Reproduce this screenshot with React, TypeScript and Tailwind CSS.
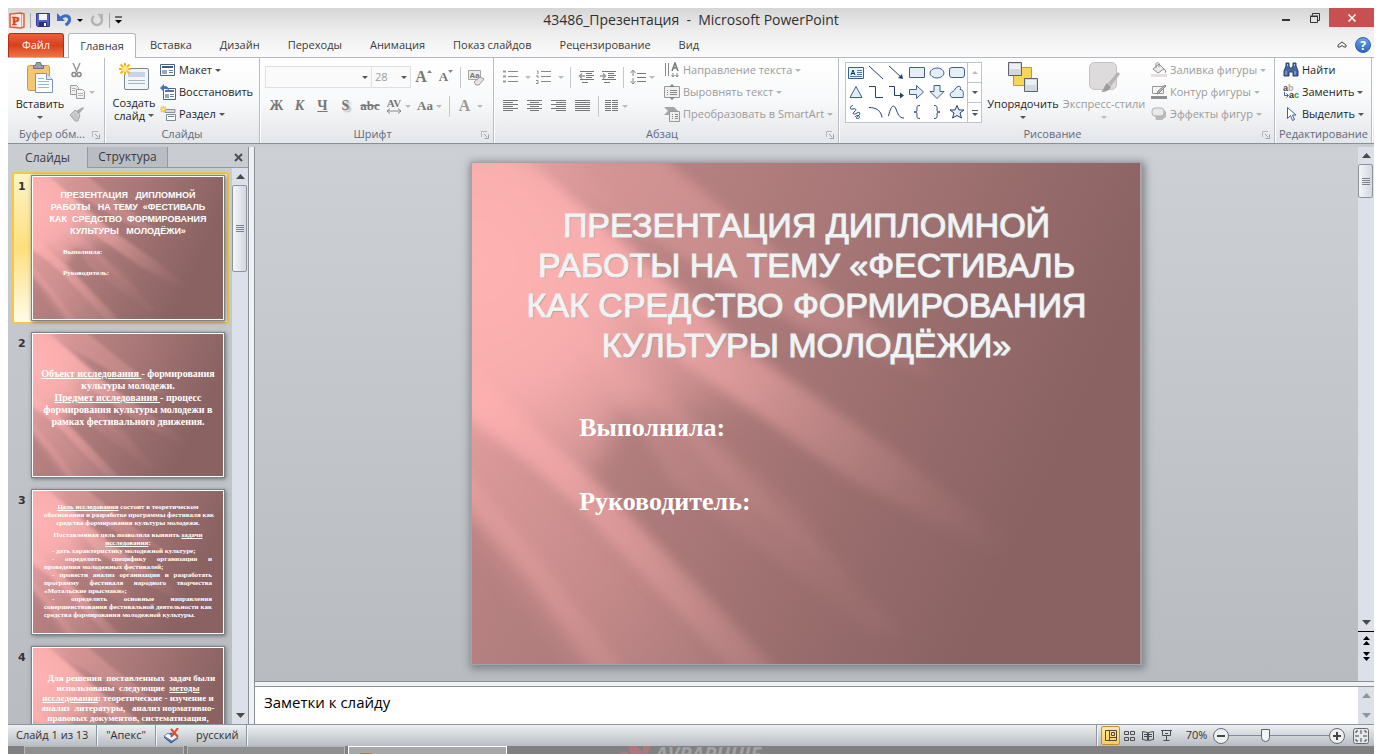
import type { ReactNode } from "react";
import { clsx } from "clsx";

const tabs = [
  "Вставка",
  "Дизайн",
  "Переходы",
  "Анимация",
  "Показ слайдов",
  "Рецензирование",
  "Вид",
];

/* ---------- small shared pieces ---------- */

function Caret({ className = "text-[#555]" }: { className?: string }) {
  return (
    <svg width="6" height="3" viewBox="0 0 6 3" className={clsx("shrink-0", className)}>
      <path d="M0 0h6L3 3z" fill="currentColor" />
    </svg>
  );
}

function Sep() {
  return <span className="mx-1 h-[21px] w-px shrink-0 bg-[#c3c8cf]" />;
}

function Icon({
  w = 16,
  h = 16,
  children,
}: {
  w?: number;
  h?: number;
  children: ReactNode;
}) {
  return (
    <svg width={w} height={h} viewBox={`0 0 ${w} ${h}`} fill="none" className="shrink-0">
      {children}
    </svg>
  );
}

function SmallButton({
  icon,
  label,
  caret = true,
  disabled = false,
}: {
  icon: ReactNode;
  label: string;
  caret?: boolean;
  disabled?: boolean;
}) {
  return (
    <button
      className={clsx(
        "flex h-[22px] items-center gap-[3px] whitespace-nowrap",
        disabled ? "text-[#9b9b9b]" : "text-[#1e1e1e]",
      )}
    >
      {icon}
      <span>{label}</span>
      {caret && <Caret className={disabled ? "text-[#b5b5b5]" : "text-[#555]"} />}
    </button>
  );
}

function Group({
  label,
  launcher = false,
  className,
  children,
}: {
  label: string;
  launcher?: boolean;
  className: string;
  children: ReactNode;
}) {
  return (
    <section
      className={clsx(
        "flex shrink-0 flex-col border-r border-[#b9bec6] shadow-[1px_0_0_#fff]",
        className,
      )}
    >
      <div className="flex h-[68px] px-1 pt-px">{children}</div>
      <div className="flex h-[17px] items-center px-1 text-[#5f6a7a]">
        <span className="flex-1 text-center">{label}</span>
        {launcher && (
          <button aria-label={`${label}: параметры`}>
            <Icon w={8} h={8}>
              <path d="M.5 6V.5H6" stroke="#b3b8bf" />
              <path d="M3 3l3 3M7.500 3.500v4h-4" stroke="#9ba1a9" />
            </Icon>
          </button>
        )}
      </div>
    </section>
  );
}

function IconButton({
  label,
  className = "w-[23px]",
  children,
}: {
  label: string;
  className?: string;
  children: ReactNode;
}) {
  return (
    <button
      aria-label={label}
      className={clsx(
        "flex h-[22px] shrink-0 items-center justify-center gap-[3px] text-[#777]",
        className,
      )}
    >
      {children}
    </button>
  );
}

/* ---------- slide background with light rays ---------- */

function ApexDefs() {
  return (
    <svg width="0" height="0" className="absolute" aria-hidden="true">
      <defs>
        <linearGradient id="apexBase" gradientUnits="userSpaceOnUse" x1="60" y1="60" x2="590" y2="300">
          <stop offset="0" stopColor="#c08787" />
          <stop offset=".45" stopColor="#aa7878" />
          <stop offset=".8" stopColor="#946969" />
          <stop offset="1" stopColor="#8a6262" />
        </linearGradient>
        <linearGradient id="apexRay" gradientUnits="userSpaceOnUse" x1="60" y1="20" x2="540" y2="390">
          <stop offset="0" stopColor="#ffb0b0" />
          <stop offset=".5" stopColor="#f2a8a8" stopOpacity=".75" />
          <stop offset="1" stopColor="#b58484" stopOpacity="0" />
        </linearGradient>
        <linearGradient id="apexLow" gradientUnits="userSpaceOnUse" x1="20" y1="230" x2="310" y2="510">
          <stop offset="0" stopColor="#ffb0b0" />
          <stop offset=".5" stopColor="#f3a8a8" stopOpacity=".7" />
          <stop offset="1" stopColor="#d29696" stopOpacity=".35" />
        </linearGradient>
        <radialGradient id="apexGlow" gradientUnits="userSpaceOnUse" cx="0" cy="100" r="320">
          <stop offset="0" stopColor="#ffb2b2" />
          <stop offset=".4" stopColor="#ffb2b2" stopOpacity=".9" />
          <stop offset="1" stopColor="#ffb2b2" stopOpacity="0" />
        </radialGradient>
        <filter id="apexWide" x="-20%" y="-20%" width="140%" height="140%">
          <feGaussianBlur stdDeviation="14" />
        </filter>
        <filter id="apexSoft" x="-20%" y="-20%" width="140%" height="140%">
          <feGaussianBlur stdDeviation="6" />
        </filter>
        <symbol id="apex" viewBox="0 0 670 503" preserveAspectRatio="none">
          <path d="M0 0h670v503H0z" fill="url(#apexBase)" />
          <g filter="url(#apexWide)">
            <path d="M-50-50H20L250 175 380 290 240 250 150 250 110 330 60 280-50 240z" fill="url(#apexGlow)" />
            <path d="M-50 210 60 290 220 450 290 550H140L0 350-50 320z" fill="url(#apexLow)" opacity=".5" />
          </g>
          <g filter="url(#apexSoft)">
            <path d="M60-10H185L300 85 470 215 330 165 150 60z" fill="url(#apexRay)" opacity=".4" />
            <path d="M45-5 275 187 430 295 562 398 520 392 380 318 210 200z" fill="url(#apexRay)" opacity=".75" />
            <path d="M-20 190 60 262 140 335 255 455 315 520H272L220 465 105 345 60 305-20 240z" fill="url(#apexLow)" opacity=".8" />
            <path d="M-20 300 0 318 70 400 160 520H130L60 420-20 330z" fill="url(#apexLow)" opacity=".35" />
            <path d="M90 150 250 290 430 470 400 470 200 320z" fill="url(#apexLow)" opacity=".25" />
            <path d="M150 190 330 350 390 430 250 320z" fill="url(#apexLow)" opacity=".2" />
          </g>
        </symbol>
      </defs>
    </svg>
  );
}

function SlideFrame({ className, children }: { className: string; children: ReactNode }) {
  return (
    <div className={clsx("grid overflow-hidden", className)}>
      <svg
        viewBox="0 0 670 503"
        preserveAspectRatio="none"
        className="h-full w-full [grid-area:1/1]"
        aria-hidden="true"
      >
        <use href="#apex" width="670" height="503" />
      </svg>
      <div className="z-10 min-h-0 overflow-hidden text-white [grid-area:1/1]">{children}</div>
    </div>
  );
}

/* ---------- title bar and tabs ---------- */

function TitleBar() {
  return (
    <header className="grid h-6 shrink-0 grid-cols-[1fr_auto_1fr] bg-gradient-to-b from-[#d6d6d6] to-[#eeeeee]">
      <div className="flex items-center gap-[7px] pl-px">
        <Icon w={16} h={17}>
          <path d="M1 2l11-1 3 1v13l-3 1-11-1z" fill="#fbe9e2" stroke="#d9603c" strokeWidth="1.500" />
          <path d="M12.500 2v13" stroke="#f0a285" />
          <text x="3" y="13" fontSize="12" fontWeight="700" fill="#d24726" stroke="#d24726" strokeWidth=".6" fontFamily="Liberation Serif, serif">
            P
          </text>
        </Icon>
        <span className="-mx-0.5 h-[15px] w-px bg-[#a9a9a9]" />
        <button aria-label="Сохранить">
          <Icon w={14} h={14}>
            <path d="M.5.5h13v13h-12l-1-1z" fill="#5560c8" stroke="#32389a" />
            <path d="M3 1h8v6H3z" fill="#f4f6ff" />
            <path d="M3 9h8v5H3z" fill="#2b307f" />
            <path d="M8 10h2v3H8z" fill="#fff" />
          </Icon>
        </button>
        <button aria-label="Отменить" className="flex items-center gap-[5px]">
          <Icon w={15} h={14}>
            <path d="M4 5c4-4 9-2 8.500 2-.3 2-2 4-4 5" stroke="#3a6cc8" strokeWidth="3" />
            <path d="M0 0v8h8z" fill="#3a6cc8" />
          </Icon>
          <Caret className="text-black" />
        </button>
        <button aria-label="Повторить">
          <Icon w={14} h={14}>
            <path d="M4 3a5 5 0 1 0 6 0" stroke="#b3b3b3" strokeWidth="2.500" />
            <path d="M7 1h6v5z" fill="#b3b3b3" />
          </Icon>
        </button>
        <span className="-mx-0.5 h-[15px] w-px bg-[#a9a9a9]" />
        <button aria-label="Настройка панели">
          <Icon w={7} h={8}>
            <path d="M0 1h7" stroke="#000" />
            <path d="M0 4h7L3.500 7.500z" fill="#000" />
          </Icon>
        </button>
      </div>
      <h1 className="self-center whitespace-pre text-sm text-[#303030]">
        43486_Презентация  -  Microsoft PowerPoint
      </h1>
      <div className="flex items-start justify-end">
        <button aria-label="Свернуть" className="grid h-[19px] w-7 place-items-center">
          <Icon w={8} h={8}>
            <path d="M0 6h8" stroke="#333" strokeWidth="2" />
          </Icon>
        </button>
        <button aria-label="Восстановить окно" className="grid h-[19px] w-[29px] place-items-center">
          <Icon w={10} h={10}>
            <path d="M2.500 2.500v-2h7v7h-2" stroke="#333" />
            <path d="M.5 3.500h7v6h-7z" stroke="#333" />
            <path d="M0 3h8" stroke="#333" />
          </Icon>
        </button>
        <button aria-label="Закрыть" className="grid h-[19px] w-[45px] place-items-center bg-[#c75050]">
          <Icon w={8} h={8}>
            <path d="M.5.5l7 7M7.500.5l-7 7" stroke="#fff" strokeWidth="1.500" />
          </Icon>
        </button>
      </div>
    </header>
  );
}

function TabRow() {
  return (
    <nav className="flex h-[26px] shrink-0 items-end border-b border-[#b3b8bf] bg-gradient-to-b from-[#eeeeee] to-[#fbfbfb] text-[#3b3b3b]">
      <button className="h-6 w-14 rounded-t-[3px] border border-b-0 border-[#b52e10] bg-gradient-to-b from-[#e8603c] via-[#d9401c] to-[#ee7447] text-white">
        Файл
      </button>
      <button className="-mb-px ml-1 h-[25px] w-[68px] rounded-t-[3px] border border-b-0 border-[#b3b8bf] bg-white">
        Главная
      </button>
      {tabs.map((tab) => (
        <button key={tab} className="h-6 whitespace-nowrap px-[14px]">
          {tab}
        </button>
      ))}
      <div className="ml-auto flex h-[25px] items-center gap-2 pr-[3px]">
        <button aria-label="Свернуть ленту">
          <Icon w={10} h={7}>
            <path d="M1 4l4-3 4 3v2H7L5 4.500 3 6H1z" stroke="#444" />
          </Icon>
        </button>
        <button
          aria-label="Справка"
          className="grid size-4 place-items-center rounded-full border border-[#2a5db0] bg-gradient-to-b from-[#6ea0e6] to-[#2f66c4] text-xs font-bold text-white"
        >
          ?
        </button>
      </div>
    </nav>
  );
}

/* ---------- ribbon groups ---------- */

function ClipboardGroup() {
  return (
    <Group label="Буфер обм..." launcher className="w-[97px]">
      <button className="flex w-14 shrink-0 flex-col items-center pt-[3px] text-[#1e1e1e]">
        <Icon w={26} h={31}>
          <rect x=".5" y="3.500" width="22" height="25" rx="2" fill="#f3c671" stroke="#d09a3c" />
          <path d="M6.500 3.500h2l1-3h4l1 3h2v3h-10z" fill="#9aa1ad" stroke="#6a7280" />
          <path d="M8.500 11.500h11l6 6v13h-17z" fill="#fff" stroke="#7f94b3" />
          <path d="M19.500 11.500v6h6" fill="#dfe8f4" stroke="#7f94b3" />
          <path d="M11 16.500h6M11 19.500h11M11 22.500h11M11 25.500h11" stroke="#9db4d2" />
        </Icon>
        <span className="mt-[3px] leading-4">Вставить</span>
        <Caret className="mt-1 text-[#555]" />
      </button>
      <div className="flex flex-col">
        <IconButton label="Вырезать" className="w-[18px]">
          <Icon>
            <path d="M4 1l4 9M11 1L7 10" stroke="#999" strokeWidth="1.500" />
            <circle cx="5" cy="12.500" r="2" stroke="#888" strokeWidth="1.500" />
            <circle cx="10" cy="12.500" r="2" stroke="#888" strokeWidth="1.500" />
          </Icon>
        </IconButton>
        <IconButton label="Копировать" className="w-[28px]">
          <Icon>
            <path d="M.5 1.500h6l2 2v7h-8z" fill="#eee" stroke="#9c9c9c" />
            <path d="M6.500 5.500h6l2 2v7h-8z" fill="#f4f4f4" stroke="#9c9c9c" />
            <path d="M2 4.500h4M2 6.500h3M8 9.500h5M8 11.500h5" stroke="#b5b5b5" />
          </Icon>
          <Caret className="text-[#bbb]" />
        </IconButton>
        <IconButton label="Формат по образцу" className="w-[18px]">
          <Icon>
            <path d="M14 1l1 1-5 6-3-3z" fill="#aaa" />
            <path d="M6 4l5 5-2 6H6L1 9z" fill="#cfcfcf" stroke="#a8a8a8" />
            <path d="M3 9l4 5M5 7l4 6" stroke="#b5b5b5" />
          </Icon>
        </IconButton>
      </div>
    </Group>
  );
}

function Burst() {
  return (
    <g stroke="#f0b81c" strokeWidth="2">
      <path d="M6 0v12M0 6h12M1.500 1.500l9 9M10.500 1.500l-9 9" />
      <circle cx="6" cy="6" r="2" fill="#fff6b8" stroke="#ffe46a" />
    </g>
  );
}

function SlidesGroup() {
  return (
    <Group label="Слайды" className="w-[155px]">
      <button className="ml-0.5 flex w-[46px] flex-col items-center pt-1 text-[#1e1e1e]">
        <Icon w={31} h={29}>
          <rect x="5.500" y="5.500" width="24" height="21" rx="1.500" fill="#f3f5f8" stroke="#7d858f" />
          <path d="M9 9h17v5H9z" fill="#c8d3e3" />
          <path d="M9 17.500h17M9 20.500h17" stroke="#a8b3c2" />
          <Burst />
        </Icon>
        <span className="mt-1 leading-[13px]">Создать</span>
        <span className="flex items-center gap-[3px] leading-[13px]">
          слайд <Caret />
        </span>
      </button>
      <div className="ml-[3px] flex flex-col">
        <SmallButton
          label="Макет"
          icon={
            <Icon>
              <path d="M.5 2.500h14v11H.5z" fill="#fff" stroke="#4e6287" />
              <path d="M2 4h11v2H2z" fill="#3e5a8c" />
              <path d="M2 8h5v4H2z" fill="#9aa8bf" />
              <path d="M9 8.500h4M9 10.500h4" stroke="#6e7f9c" />
            </Icon>
          }
        />
        <SmallButton
          label="Восстановить"
          caret={false}
          icon={
            <Icon>
              <path d="M3.500 4.500h12v11h-12z" fill="#fff" stroke="#4e6287" />
              <path d="M5 6h9v2H5z" fill="#5a7099" />
              <path d="M5 10h4v4H5z" fill="#9aa8bf" />
              <path d="M10 10.500h4M10 12.500h4" stroke="#6e7f9c" />
              <path d="M0 4l4-4v2c3 0 5 1 5 5C8 5 7 5 4 5v3z" fill="#3f74c6" />
            </Icon>
          }
        />
        <SmallButton
          label="Раздел"
          icon={
            <Icon>
              <path d="M5 3.500h10v3H5z" fill="#d5d9df" stroke="#8a919b" />
              <path d="M6.500 8.500h9v6h-9z" fill="#f7f9fb" stroke="#7d8896" />
              <path d="M8 10.500h6" stroke="#6b7f9c" />
              <g transform="scale(.55)">
                <Burst />
              </g>
            </Icon>
          }
        />
      </div>
    </Group>
  );
}

function FontGroup() {
  return (
    <Group label="Шрифт" launcher className="w-[234px]">
      <div className="flex flex-col gap-[7px] pt-[7px]">
        <div className="flex items-center pl-px">
          <div className="grid items-center">
            <select
              aria-label="Шрифт"
              className="h-[22px] w-[107px] appearance-none border border-[#dcdfe4] bg-[#fafafb] [grid-area:1/1]"
            />
            <span className="pointer-events-none justify-self-end pr-1 [grid-area:1/1]">
              <Caret />
            </span>
          </div>
          <div className="-ml-px grid items-center">
            <select
              aria-label="Размер шрифта"
              className="h-[22px] w-10 appearance-none border border-[#dcdfe4] bg-[#fafafb] pl-[3px] text-[#9b9b9b] [grid-area:1/1]"
            >
              <option>28</option>
            </select>
            <span className="pointer-events-none justify-self-end pr-1 [grid-area:1/1]">
              <Caret />
            </span>
          </div>
          <button
            aria-label="Увеличить размер"
            className="flex h-[22px] w-[25px] items-center justify-center text-[#777]"
          >
            <span className="font-['Liberation_Serif',serif] text-base font-bold leading-5">A</span>
            <Icon w={5} h={16}>
              <path d="M0 4h5L2.500 1z" fill="#888" />
            </Icon>
          </button>
          <button
            aria-label="Уменьшить размер"
            className="flex h-[22px] w-5 items-center justify-center text-[#777]"
          >
            <span className="font-['Liberation_Serif',serif] text-[13px] font-bold leading-5">A</span>
            <Icon w={5} h={16}>
              <path d="M0 1h5L2.500 4z" fill="#888" />
            </Icon>
          </button>
          <Sep />
          <IconButton label="Очистить формат">
            <Icon w={17} h={17}>
              <path d="M.5 1.500h12v9H.5z" fill="#ececec" stroke="#a5a5a5" />
              <text x="1.500" y="9" fontSize="8" fontWeight="700" fill="#777" fontFamily="Liberation Sans, sans-serif">
                Aa
              </text>
              <path d="M6 13l6-5 4 2-5 6H8z" fill="#e9e3e6" stroke="#999" />
            </Icon>
          </IconButton>
        </div>
        <div className="flex items-center pl-px font-['Liberation_Serif',serif] text-sm">
          <IconButton label="Полужирный">
            <b>Ж</b>
          </IconButton>
          <IconButton label="Курсив">
            <b className="italic">К</b>
          </IconButton>
          <IconButton label="Подчеркнутый">
            <b className="underline">Ч</b>
          </IconButton>
          <IconButton label="Тень текста">
            <b className="[text-shadow:2px_2px_2px_#aaa]">S</b>
          </IconButton>
          <IconButton label="Зачеркнутый" className="w-[26px]">
            <b className="text-[13px] line-through">abc</b>
          </IconButton>
          <IconButton label="Интервал" className="w-[31px]">
            <span className="flex flex-col items-center">
              <b className="text-[11px] leading-[10px]">AV</b>
              <Icon w={16} h={6}>
                <path d="M1 3h14M4 .5L1 3l3 2.500M12 .5L15 3l-3 2.500" stroke="#888" />
              </Icon>
            </span>
            <Caret className="text-[#bbb]" />
          </IconButton>
          <IconButton label="Регистр" className="w-[31px]">
            <b className="text-[13px]">Aa</b>
            <Caret className="text-[#bbb]" />
          </IconButton>
          <Sep />
          <IconButton label="Цвет текста" className="w-[34px]">
            <b className="text-base text-[#999]">A</b>
            <Caret className="ml-1 text-[#bbb]" />
          </IconButton>
        </div>
      </div>
    </Group>
  );
}

function Lines({ d }: { d: string }) {
  return (
    <Icon w={15} h={12}>
      <path d={d} stroke="#777" />
    </Icon>
  );
}

function ParagraphGroup() {
  return (
    <Group label="Абзац" launcher className="w-[345px]">
      <div className="flex w-[166px] flex-col gap-[7px] pt-[7px]">
        <div className="flex items-center pl-0.5">
          <IconButton label="Маркеры" className="w-[33px]">
            <Icon w={15} h={14}>
              <path d="M0 1.500h3M0 6.500h3M0 11.500h3" stroke="#999" strokeWidth="2" />
              <path d="M5 1.500h10M5 6.500h10M5 11.500h10" stroke="#888" />
            </Icon>
            <Caret className="ml-1 text-[#bbb]" />
          </IconButton>
          <IconButton label="Нумерация" className="w-[33px]">
            <Icon w={15} h={14}>
              <path d="M1 1h1v3M0 6h2v2M0 10.500h2v3H0" stroke="#888" />
              <path d="M5 1.500h10M5 6.500h10M5 11.500h10" stroke="#888" />
            </Icon>
            <Caret className="ml-1 text-[#bbb]" />
          </IconButton>
          <Sep />
          <IconButton label="Уменьшить отступ" className="w-[22px]">
            <Icon w={16} h={14}>
              <path d="M2 1.500h14M8 3.500h6M8 5.500h8M8 7.500h6M2 9.500h14M4 12.500h6" stroke="#777" />
              <path d="M7 6H2M4 3.500L1.500 6 4 8.500" stroke="#999" strokeWidth="1.500" />
            </Icon>
          </IconButton>
          <IconButton label="Увеличить отступ" className="w-[22px]">
            <Icon w={16} h={14}>
              <path d="M2 1.500h14M8 3.500h6M8 5.500h8M8 7.500h6M2 9.500h14M4 12.500h6" stroke="#777" />
              <path d="M0 6h5M3 3.500L5.500 6 3 8.500" stroke="#999" strokeWidth="1.500" />
            </Icon>
          </IconButton>
          <Sep />
          <IconButton label="Междустрочный интервал" className="w-[28px]">
            <Icon w={16} h={16}>
              <path d="M3 2v5M3 9v5M.5 4L3 1l2.500 3M.5 12L3 15l2.500-3" stroke="#888" />
              <path d="M7 4.500h9M7 8.500h9M7 12.500h9" stroke="#777" />
            </Icon>
            <Caret className="text-[#bbb]" />
          </IconButton>
        </div>
        <div className="flex items-center">
          <IconButton label="По левому краю" className="w-6">
            <Lines d="M0 .5h15M0 2.500h10M0 4.500h15M0 6.500h10M0 8.500h15M0 10.500h10" />
          </IconButton>
          <IconButton label="По центру" className="w-6">
            <Lines d="M0 .5h15M3 2.500h9M0 4.500h15M3 6.500h9M0 8.500h15M3 10.500h9" />
          </IconButton>
          <IconButton label="По правому краю" className="w-6">
            <Lines d="M0 .5h15M5 2.500h10M0 4.500h15M5 6.500h10M0 8.500h15M5 10.500h10" />
          </IconButton>
          <IconButton label="По ширине" className="w-6">
            <Lines d="M0 .5h15M0 2.500h15M0 4.500h15M0 6.500h15M0 8.500h15M0 10.500h15" />
          </IconButton>
          <Sep />
          <IconButton label="Колонки" className="w-[26px]">
            <Lines d="M1 .5h6M8 .5h6M1 2.500h6M8 2.500h6M1 4.500h6M8 4.500h6M1 6.500h6M8 6.500h6M1 8.500h6M8 8.500h6M1 10.500h6M8 10.500h6" />
            <Caret className="text-[#bbb]" />
          </IconButton>
        </div>
      </div>
      <div className="flex flex-col">
        <SmallButton
          disabled
          label="Направление текста"
          icon={
            <Icon>
              <path d="M1.500 1v13M4.500 1v13M9 11v4M13 11v4M7.500 13L9 15l1.500-2M11.500 13l1.500 2 1.500-2" stroke="#888" />
              <path d="M8 9l3-8 3 8M9 6h4" stroke="#777" strokeWidth="1.500" />
            </Icon>
          }
        />
        <SmallButton
          disabled
          label="Выровнять текст"
          icon={
            <Icon>
              <path d="M.5 2.500h15v11H.5z" fill="#efefef" stroke="#999" />
              <path d="M3 6.500h1M6 6.500h7M3 8.500h1M6 8.500h7M3 10.500h1M6 10.500h7" stroke="#888" />
              <path d="M5 3l3-3 3 3zM5 13l3 3 3-3z" fill="#888" />
            </Icon>
          }
        />
        <SmallButton
          disabled
          label="Преобразовать в SmartArt"
          icon={
            <Icon>
              <path d="M0 1h10l4 4-4 4H0l4-4z" fill="#a5a5a5" />
              <path d="M5.500 5.500h10v10h-10z" fill="#eee" stroke="#999" />
              <path d="M8 8.500h1M11 8.500h3M8 10.500h1M11 10.500h3M8 12.500h1M11 12.500h3" stroke="#888" />
            </Icon>
          }
        />
      </div>
    </Group>
  );
}

// outlines of the shapes gallery, drawn in a 16x14 box
const shapes = [
  <>
    <path d="M.5 1.500h15v11H.5z" fill="#e8f0f8" stroke="#3f5f8f" />
    <path d="M3 9l2-5 2 5M3.500 7.500h3" stroke="#1c2e50" />
    <path d="M9 4.500h5M9 6.500h5M9 8.500h5M2 10.500h12" stroke="#4d78b0" />
  </>,
  <path d="M1 0l14 13" stroke="#24406e" />,
  <>
    <path d="M1 0l12 11" stroke="#24406e" />
    <path d="M15 13l-5-1 4-4z" fill="#24406e" />
  </>,
  <path d="M.5 1.500h15v10H.5z" fill="#e4eef7" stroke="#3f5f8f" />,
  <ellipse cx="8" cy="7" rx="7" ry="5" fill="#e4eef7" stroke="#3f5f8f" />,
  <rect x=".5" y="1.500" width="15" height="10" rx="2.500" fill="#e4eef7" stroke="#3f5f8f" />,
  <path d="M8 1.500l6 11H2z" fill="#e4eef7" stroke="#3f5f8f" />,
  <path d="M1 1.500h6.500v11H15" stroke="#24406e" />,
  <>
    <path d="M1 1.500h5.500v9H14" stroke="#24406e" />
    <path d="M12 7.500l4 3-4 3z" fill="#24406e" />
  </>,
  <path d="M.5 4.500h7v-4l7 6.500-7 6.500v-4h-7z" fill="#e4eef7" stroke="#3f5f8f" />,
  <path d="M5 .5h6v6h4l-7 7-7-7h4z" fill="#e4eef7" stroke="#3f5f8f" />,
  <path d="M3 12.500c-3-2-2-5 1-6 2-1 2-4 5-5 3-1 3 2 2 3 3 0 4 2 3 8z" fill="#e4eef7" stroke="#3f5f8f" />,
  <path d="M5 0c-4 2-3 5 0 4 3-1 4 1 1 3-2 2 0 3 3 1s4 1 1 3-1 4 1 2-2-4-4-1" stroke="#24406e" />,
  <path d="M1 2.500c7 0 12 3 13 10" stroke="#24406e" />,
  <path d="M.5 11C3 0 6-1 8 4s3 9 8 9" stroke="#24406e" />,
  <path d="M11 .5C7 .5 8 3 8 5s-1 2-3 2c2 0 3 0 3 2s-1 4.500 3 4.500" stroke="#24406e" />,
  <path d="M5 .5c4 0 3 2.500 3 4.500s1 2 3 2c-2 0-3 0-3 2s1 4.500-3 4.500" stroke="#24406e" />,
  <path d="M8 .5l2 4.500h5l-4 3 1.500 5L8 10.500 3.500 13 5 8 1 5h5z" fill="#e4eef7" stroke="#24406e" />,
];

function DrawingGroup() {
  return (
    <Group label="Рисование" launcher className="w-[436px]">
      <div className="ml-0.5 mt-[3px] flex h-[61px] w-[137px] border border-[#bcc3cc] bg-white">
        <div className="grid flex-1 grid-cols-6 grid-rows-3">
          {shapes.map((shape, i) => (
            <button key={i} aria-label={`Фигура ${i + 1}`} className="grid place-items-center">
              <Icon w={16} h={14}>
                {shape}
              </Icon>
            </button>
          ))}
        </div>
        <div className="flex w-[14px] flex-col divide-y divide-[#bcc3cc] border-l border-[#bcc3cc]">
          <button aria-label="Вверх" className="grid flex-1 place-items-center">
            <span className="rotate-180">
              <Caret className="text-[#bbb]" />
            </span>
          </button>
          <button aria-label="Вниз" className="grid flex-1 place-items-center">
            <Caret />
          </button>
          <button aria-label="Все фигуры" className="grid flex-1 place-items-center">
            <Icon w={6} h={6}>
              <path d="M0 .5h6" stroke="#555" />
              <path d="M0 3h6L3 6z" fill="#555" />
            </Icon>
          </button>
        </div>
      </div>
      <button className="ml-1 flex w-[74px] flex-col items-center pt-[3px] text-[#1e1e1e]">
        <Icon w={31} h={31}>
          <path d="M5.500 5.500h18v18h-18z" fill="#f6d55f" stroke="#c79a2c" />
          <path d="M.5.500h13v13H.5zM16.500 16.500h13v13h-13z" fill="#d3d8de" stroke="#59626e" />
          <path d="M2 2h10v5H2zM18 18h10v5H18z" fill="#edf0f3" />
        </Icon>
        <span className="mt-[3px] leading-4">Упорядочить</span>
        <Caret className="mt-1 text-[#555]" />
      </button>
      <button className="flex w-[88px] flex-col items-center whitespace-nowrap pt-[3px] text-[#9b9b9b]">
        <Icon w={31} h={31}>
          <rect x=".5" y=".5" width="27" height="27" rx="5" fill="#dedbdd" stroke="#c3bfc2" />
          <path d="M29 10l2 2-9 12-3-3z" fill="#b5b5b5" />
          <path d="M18 21l4 4c-2 4-6 5-10 5 3-2 3-6 6-9z" fill="#9c9c9c" />
        </Icon>
        <span className="mt-[3px] leading-4">Экспресс-стили</span>
        <Caret className="mt-1 text-[#bbb]" />
      </button>
      <div className="ml-[3px] flex flex-col">
        <SmallButton
          disabled
          label="Заливка фигуры"
          icon={
            <Icon>
              <path d="M2 7l6-5 5 5-6 4z" fill="#ececec" stroke="#8d8d8d" />
              <path d="M5 6V1.500c0-1 3-1 3 0V5M13 7c2 1 2 3 1 4" stroke="#8d8d8d" />
              <path d="M0 12h16v3H0z" fill="#e5dfe3" />
            </Icon>
          }
        />
        <SmallButton
          disabled
          label="Контур фигуры"
          icon={
            <Icon>
              <path d="M1.500 2.500h11v7h-11z" fill="#f5f5f5" stroke="#999" />
              <path d="M14 1l1 1-7 7-2 1 1-3z" fill="#bbb" stroke="#888" />
              <path d="M0 12h16v3H0z" fill="#8f8f8f" />
            </Icon>
          }
        />
        <SmallButton
          disabled
          label="Эффекты фигур"
          icon={
            <Icon>
              <path d="M3 7l9-4 3 3v5l-4 3H5z" fill="#b9b9b9" />
              <rect x="1" y="2" width="12" height="8" rx="3" fill="#e9e9e9" stroke="#b0b0b0" />
            </Icon>
          }
        />
      </div>
    </Group>
  );
}

function EditingGroup() {
  return (
    <Group label="Редактирование" className="w-[97px]">
      <div className="ml-1 flex flex-col">
        <SmallButton
          caret={false}
          label="Найти"
          icon={
            <Icon>
              <path d="M3 1h3v3l1 2h2l1-2V1h3v3l2 5v5h-5v-4H6v4H1V9l2-5z" fill="#4766a0" stroke="#26406f" />
              <path d="M3 9v4M12 9v4M4.500 2v2M11.500 2v2" stroke="#a9c0e6" />
            </Icon>
          }
        />
        <SmallButton
          label="Заменить"
          icon={
            <Icon>
              <g fontSize="9" fontWeight="700" fontFamily="Liberation Sans, sans-serif">
                <text x="0" y="7" fill="#444">
                  a<tspan fill="#aaa">b</tspan>
                </text>
                <text x="6" y="14" fill="#333">
                  a<tspan fill="#2a9a2a">c</tspan>
                </text>
              </g>
              <path d="M1.500 8v3.500H5M3.500 9.500l2 2-2 2" stroke="#3f64b0" />
            </Icon>
          }
        />
        <SmallButton
          label="Выделить"
          icon={
            <Icon>
              <path d="M4.500 1.500v11l3-3 2 5 2-1-2-4.500h3.500z" fill="#fff" stroke="#44608f" />
            </Icon>
          }
        />
      </div>
    </Group>
  );
}

/* ---------- scroll bar ---------- */

function ArrowButton({
  up = false,
  label,
  className = "text-[#4a4a4a]",
}: {
  up?: boolean;
  label: string;
  className?: string;
}) {
  return (
    <button aria-label={label} className="grid h-[17px] w-full shrink-0 place-items-center">
      <svg width="9" height="5" viewBox="0 0 9 5" className={className}>
        <path d={up ? "M0 5h9L4.500 0z" : "M0 0h9L4.500 5z"} fill="currentColor" />
      </svg>
    </button>
  );
}

function ScrollThumb({ className }: { className: string }) {
  return (
    <div
      className={clsx(
        "grid w-[15px] shrink-0 place-items-center rounded-xs border border-[#8e949e] bg-gradient-to-r from-[#f4f5f7] to-[#d3d8df]",
        className,
      )}
    >
      <Icon w={8} h={7}>
        <path d="M0 .5h8M0 2.500h8M0 4.500h8M0 6.500h8" stroke="#7b828c" />
      </Icon>
    </div>
  );
}

/* ---------- thumbnails ---------- */

const thumbText = "font-['Liberation_Serif',serif] font-bold";

const thumbnails: ReactNode[] = [
  <div key="1">
    <p className="whitespace-pre pt-3 text-center font-['Liberation_Sans',sans-serif] text-[9px] font-bold leading-3">
      {"ПРЕЗЕНТАЦИЯ   ДИПЛОМНОЙ\nРАБОТЫ   НА ТЕМУ  «ФЕСТИВАЛЬ\nКАК  СРЕДСТВО  ФОРМИРОВАНИЯ\nКУЛЬТУРЫ   МОЛОДЁЖИ»"}
    </p>
    <div className={clsx(thumbText, "pl-[30px] pt-[10px] text-[7px] leading-[10px]")}>
      <p>Выполнила:</p>
      <p className="pt-[11px]">Руководитель:</p>
    </div>
  </div>,
  <p key="2" className={clsx(thumbText, "whitespace-nowrap pt-[34px] text-center text-[10px] leading-3")}>
    <u>Объект исследования </u>- формирования
    <br />
    культуры молодежи.
    <br />
    <u>Предмет исследования </u>- процесс
    <br />
    формирования культуры молодежи в
    <br />
    рамках фестивального движения.
  </p>,
  <div key="3" className={clsx(thumbText, "px-[11px] pt-3 text-[7px] leading-[8px]")}>
    <p className="whitespace-nowrap text-center">
      <u>Цель исследования</u> состоит в теоретическом
      <br />
      обосновании и разработке программы фестиваля как
      <br />
      средства формирования культуры молодежи.
    </p>
    <p className="pt-1 text-center">
      Поставленная цель позволила выявить <u>задачи</u>
      <br />
      <u>исследования</u>:
    </p>
    <p className="indent-2 text-justify">- дать характеристику молодежной культуре;</p>
    <p className="indent-2 text-justify">
      - определить специфику организации и проведения молодежных фестивалей;
    </p>
    <p className="indent-2 text-justify">
      - провести анализ организации и разработать программу фестиваля народного творчества
      «Мотальские прысмаки»;
    </p>
    <p className="indent-2 text-justify">
      - определить основные направления совершенствования фестивальной деятельности как средства
      формирования молодежной культуры.
    </p>
  </div>,
  <p key="4" className={clsx(thumbText, "whitespace-pre pt-[25px] text-center text-[9px] leading-[10px]")}>
    {"   Для решения  поставленных  задач были\nиспользованы  следующие  "}
    <u>методы</u>
    {"\n"}
    <u>исследования</u>
    {": теоретические - изучение и\nанализ  литературы,   анализ нормативно-\nправовых документов, систематизация,"}
  </p>,
];

function SlidesPane() {
  return (
    <aside className="flex w-[241px] shrink-0 flex-col border-r border-[#8b9098]">
      <div className="flex h-[21px] shrink-0 text-[11px] text-[#3b3b3b]">
        <button className="w-[79px] text-xs">Слайды</button>
        <button className="w-[81px] border border-t-0 border-[#9499a1] bg-[#b9bdc3] text-xs">
          Структура
        </button>
        <div className="flex flex-1 items-center justify-end border-b border-[#9499a1] pr-[5px]">
          <button aria-label="Закрыть панель">
            <Icon w={9} h={9}>
              <path d="M1 1l7 7M8 1L1 8" stroke="#4c4f54" strokeWidth="2" />
            </Icon>
          </button>
        </div>
      </div>
      <div className="flex min-h-0 flex-1">
        <ol className="min-w-0 flex-1 overflow-hidden px-1 pt-1">
          {thumbnails.map((thumb, i) => (
            <li
              key={i}
              className={clsx(
                "mb-[5px] flex h-[152px] w-[217px] rounded-xs border-2 pt-0.5",
                i === 0
                  ? "border-[#f2c845] bg-gradient-to-b from-[#fdf3c4] via-[#fddf7c] to-[#fffbe6]"
                  : "border-transparent",
              )}
            >
              <span className="w-[18px] pt-[3px] pl-1 font-['DejaVu_Sans',sans-serif] text-[11px] font-bold text-[#333]">
                {i + 1}
              </span>
              <SlideFrame className="h-36 w-48 border border-white shadow-[0_0_0_1px_#7d8288,1px_1px_4px_1px_#6b7076]">
                {thumb}
              </SlideFrame>
            </li>
          ))}
        </ol>
        <div className="flex w-4 flex-col bg-[#dbe0e9]">
          <ArrowButton up label="Прокрутить вверх" />
          <ScrollThumb className="h-[87px]" />
          <div className="flex-1" />
          <ArrowButton label="Прокрутить вниз" />
        </div>
      </div>
    </aside>
  );
}

/* ---------- editing area ---------- */

function Editor() {
  return (
    <main className="flex min-w-0 flex-1 flex-col border-l border-[#8b9098]">
      <div className="flex min-h-0 flex-1 border-b border-[#8b9098] bg-gradient-to-b from-[#cdd0d5] to-[#b8bcc1]">
        <div className="flex min-w-0 flex-1 justify-center pt-[15px] pb-4">
          <SlideFrame className="aspect-[4/3] h-full border border-[#a3a3a8] shadow-[1px_2px_8px_2px_#7e8388]">
            <h2 className="pt-[42px] text-center font-['Liberation_Sans',sans-serif] text-[34px] leading-10 text-[#f4f4f4] [-webkit-text-stroke:1px_#eef1f1] [text-shadow:1px_1px_1px_#8e9a9a]">
              ПРЕЗЕНТАЦИЯ ДИПЛОМНОЙ
              <br />
              РАБОТЫ НА ТЕМУ «ФЕСТИВАЛЬ
              <br />
              КАК СРЕДСТВО ФОРМИРОВАНИЯ
              <br />
              КУЛЬТУРЫ МОЛОДЁЖИ»
            </h2>
            <div className="pl-[107px] pt-11 font-['Liberation_Serif',serif] text-[26px] font-bold leading-[37px]">
              <p>Выполнила:</p>
              <p className="pt-[37px]">Руководитель:</p>
            </div>
          </SlideFrame>
        </div>
        <div className="flex w-4 flex-col bg-[#dbe0e9]">
          <ArrowButton up label="Прокрутить вверх" />
          <ScrollThumb className="h-[34px]" />
          <div className="flex-1" />
          <ArrowButton label="Прокрутить вниз" />
          <div className="flex h-[50px] flex-col items-center gap-[7px] border-t border-black pt-1 text-black">
            <button aria-label="Предыдущий слайд">
              <Icon w={7} h={9}>
                <path d="M0 4h7L3.500 0zM0 9h7L3.500 5z" fill="#000" />
              </Icon>
            </button>
            <button aria-label="Следующий слайд">
              <Icon w={7} h={9}>
                <path d="M0 0h7L3.500 4zM0 5h7L3.500 9z" fill="#000" />
              </Icon>
            </button>
          </div>
        </div>
      </div>
      <div className="h-1 shrink-0 bg-[#f0f1f3]" />
      <div className="flex h-[38px] shrink-0 border-t border-[#8b9098] bg-white">
        <textarea
          aria-label="Заметки"
          defaultValue="Заметки к слайду"
          className="flex-1 resize-none overflow-hidden px-[9px] pt-1 text-[15px] leading-[22px] text-black outline-none"
        />
        <div className="flex w-4 flex-col justify-between bg-[#dbe0e9]">
          <ArrowButton up label="Заметки вверх" className="text-[#8a9896]" />
          <ArrowButton label="Заметки вниз" className="text-[#8a9896]" />
        </div>
      </div>
    </main>
  );
}

/* ---------- status bar ---------- */

function StatusSep() {
  return <span className="h-full w-px shrink-0 bg-[#8f959c] shadow-[1px_0_0_#f4f4f4]" />;
}

function StatusBar() {
  return (
    <footer className="flex h-[22px] shrink-0 items-center border-t border-[#8b96a5] bg-gradient-to-b from-[#eef0f2] to-[#b8bdc3] text-[#2f3236]">
      <span className="w-[88px] pl-2">Слайд 1 из 13</span>
      <StatusSep />
      <span className="w-[58px] text-center">"Апекс"</span>
      <StatusSep />
      <button aria-label="Проверка правописания" className="ml-[7px]">
        <Icon w={17} h={16}>
          <path d="M1 9l7-4 7 5-7 5z" fill="#4d77bd" stroke="#2f528e" />
          <path d="M1 8l4-3 4 3 3-2 3 3-6 4z" fill="#f4f7fb" stroke="#6b87b3" />
          <path d="M8 1l7 8M15 0L8 9" stroke="#e04a2a" strokeWidth="2" />
        </Icon>
      </button>
      <span className="w-[66px] pl-4">русский</span>
      <StatusSep />
      <div className="ml-auto flex h-full items-center">
        <StatusSep />
        <button
          aria-label="Обычный"
          className="ml-1 grid size-[19px] place-items-center rounded-xs border border-[#c2912e] bg-gradient-to-b from-[#fde9a0] to-[#fbd04f]"
        >
          <Icon w={12} h={11}>
            <path d="M.5.5h11v10H.5zM4.500.5v10M6.500 2.500h3v3h-3zM4.500 7.500h7" stroke="#4f4a3a" />
          </Icon>
        </button>
        <button aria-label="Сортировщик" className="grid w-[19px] place-items-center">
          <Icon w={11} h={10}>
            <path d="M.5.5h4v3h-4zM6.500.5h4v3h-4zM.5 6.500h4v3h-4zM6.500 6.500h4v3h-4z" stroke="#4a4e54" />
          </Icon>
        </button>
        <button aria-label="Режим чтения" className="grid w-[18px] place-items-center">
          <Icon w={12} h={11}>
            <path d="M.5 1.500l5 1v8l-5-1zM11.500 1.500l-5 1v8l5-1zM2 4.500h3M2 6.500h3M7 4.500h3M7 6.500h3" stroke="#4a4e54" />
          </Icon>
        </button>
        <button aria-label="Показ слайдов" className="grid w-[19px] place-items-center">
          <Icon w={11} h={11}>
            <path d="M0 .5h11M1.500 1v4.500h8V1M4 3.500h3M5.500 6v4M2.500 10.500h6" stroke="#4a4e54" />
          </Icon>
        </button>
        <button className="w-[37px] pl-1 text-center">70%</button>
        <button aria-label="Уменьшить">
          <Icon>
            <circle cx="8" cy="8" r="7.500" fill="#eef0f2" stroke="#666b72" />
            <path d="M4 8h8" stroke="#444" strokeWidth="2" />
          </Icon>
        </button>
        <input
          type="range"
          aria-label="Масштаб"
          min={0}
          max={100}
          defaultValue={35}
          className="h-4 w-[100px] appearance-none bg-transparent [&::-webkit-slider-runnable-track]:h-px [&::-webkit-slider-runnable-track]:bg-[#7f8ba0] [&::-webkit-slider-thumb]:-mt-[6px] [&::-webkit-slider-thumb]:h-[13px] [&::-webkit-slider-thumb]:w-[9px] [&::-webkit-slider-thumb]:appearance-none [&::-webkit-slider-thumb]:rounded-b-full [&::-webkit-slider-thumb]:border [&::-webkit-slider-thumb]:border-[#5c6470] [&::-webkit-slider-thumb]:bg-[#f2f3f5]"
        />
        <button aria-label="Увеличить">
          <Icon>
            <circle cx="8" cy="8" r="7.500" fill="#eef0f2" stroke="#666b72" />
            <path d="M4 8h8M8 4v8" stroke="#444" strokeWidth="2" />
          </Icon>
        </button>
        <button aria-label="Вписать" className="ml-2 mr-[5px]">
          <Icon>
            <rect x=".5" y=".5" width="15" height="15" rx="2" fill="#e6e8ea" stroke="#666b72" />
            <path d="M8 2v4M8 10v4M2 8h4M10 8h4M3 3h2M3 3v2M13 3h-2M13 3v2M3 13h2M3 13v-2M13 13h-2M13 13v-2" stroke="#444" />
          </Icon>
        </button>
      </div>
    </footer>
  );
}

function Taskbar() {
  return (
    <div className="flex h-2 shrink-0 overflow-hidden bg-[#808080]" aria-hidden="true">
      <div className="ml-4 w-[160px] border border-b-0 border-[#b5b5b5] bg-[#8f8f8f]" />
      <div className="ml-[3px] w-[158px] border border-b-0 border-[#b5b5b5] bg-[#8f8f8f]" />
      <div className="ml-[3px] w-[159px] border border-b-0 border-white bg-[#a8a8a8] pl-[11px] pt-[6px]">
        <div className="h-px w-3 bg-[#d9642e]" />
      </div>
      <div className="ml-28 flex">
        <Icon w={32} h={8}>
          <path d="M0 8l5-3 5 3zM9 0h9l6 7V0h8l-4 8H12z" fill="#b07680" />
        </Icon>
        <span className="pl-1 text-xl font-bold italic leading-4 text-[#a3a3a3]">AVPAPUUIF</span>
      </div>
    </div>
  );
}

export default function App() {
  return (
    <div className="flex h-screen flex-col overflow-hidden bg-white px-2 pt-2 font-['Open_Sans','Noto_Sans',sans-serif] text-[11px]">
      <ApexDefs />
      <TitleBar />
      <TabRow />
      <div className="flex h-[86px] shrink-0 border-b border-[#8b9098] bg-gradient-to-b from-white via-[#f8f9fa] to-[#e3e6ea]">
        <ClipboardGroup />
        <SlidesGroup />
        <FontGroup />
        <ParagraphGroup />
        <DrawingGroup />
        <EditingGroup />
      </div>
      <div className="flex min-h-0 flex-1 bg-gradient-to-b from-[#c9ccd1] to-[#b9bdc2] pt-[3px]">
        <SlidesPane />
        <div className="w-[5px] shrink-0 bg-[#f0f1f3]" />
        <Editor />
      </div>
      <StatusBar />
      <Taskbar />
    </div>
  );
}
